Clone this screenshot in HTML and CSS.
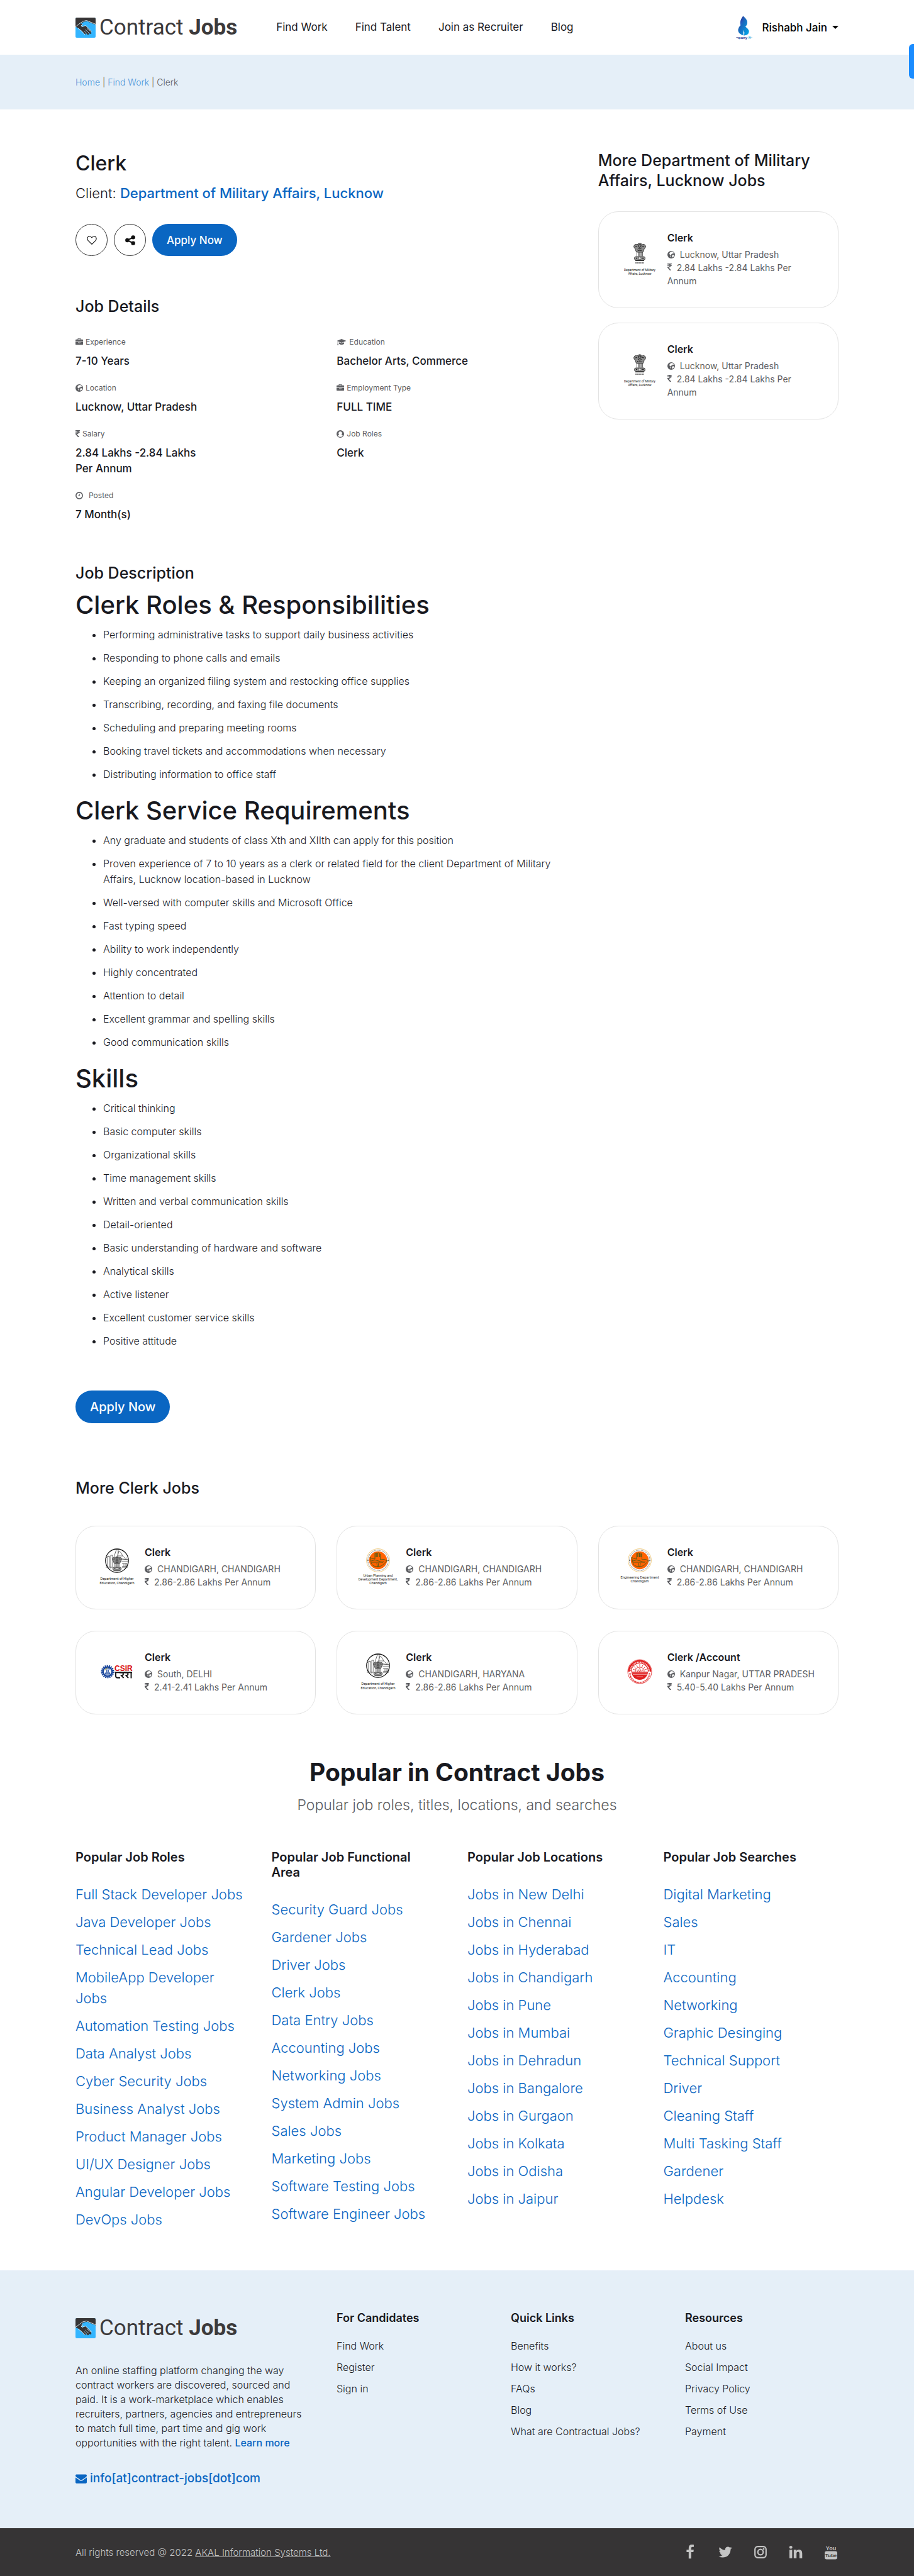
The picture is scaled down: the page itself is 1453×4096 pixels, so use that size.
FILE: index.html
```html
<!DOCTYPE html>
<html lang="en">
<head>
<meta charset="utf-8">
<meta name="viewport" content="width=device-width, initial-scale=1">
<title>Clerk | Contract Jobs</title>
<link rel="stylesheet" href="styles.css">
</head>
<body>
<svg class="sprite" aria-hidden="true">
  <symbol id="i-mark" viewBox="0 0 32 32">
    <rect width="32" height="32" rx="2" fill="#33b5ff"/>
    <path d="M2 0h28q2 0 2 2v9.500l-8.500-3.500-5-2.200-5 1-7.500 4.700-6 3.500V2q0-2 2-2z" fill="#363435"/>
    <path d="M0 14.500 6.500 9l5.500 1.500-3 2.300 1.500 1.700 5.500-2 9.500 9.500-1 1.500 1 1.500-1.500 1-3.200-1.500.7 2.300-2 .4-3.500-3 .5 2.300-1.800.3L10 21.500 4 16.500z" fill="#363435"/>
    <path d="M0 14.500 6 10l5.500-4 6-1.500L32 10.500M12 10.300l-3 2.500 1.500 1.700 5.500-2 9.800 9.700M4 17l6 4.500 5 5.500" fill="none" stroke="#e8f7ff" stroke-width=".9"/>
    <path d="m15.500 19 5.500 5M13.500 21l4.500 4.500M18 17l6 5" stroke="#bfe8ff" stroke-width=".8"/>
  </symbol>
  <symbol id="i-briefcase" viewBox="0 0 1792 1792"><path d="M640 256h512v-128h-512v128zm1152 640v480q0 66-47 113t-113 47h-1472q-66 0-113-47t-47-113v-480h672v160q0 26 19 45t45 19h320q26 0 45-19t19-45v-160h672zm-768 0v128h-256v-128h256zm768-480v384h-1792v-384q0-66 47-113t113-47h352v-160q0-40 28-68t68-28h576q40 0 68 28t28 68v160h352q66 0 113 47t47 113z"/></symbol>
  <symbol id="i-rupee" viewBox="448 0 900 1792"><path d="M1345 470v102q0 14-9 23t-23 9h-168q-23 144-129 234t-276 110q167 178 459 536 14 16 4 34-8 18-29 18h-195q-16 0-25-12-306-367-498-571-9-9-9-22v-127q0-13 9.500-22.500t22.500-9.500h112q132 0 212.500-43t102.500-125h-427q-14 0-23-9t-9-23v-102q0-14 9-23t23-9h413q-57-113-268-113h-145q-13 0-22.500-9.500t-9.500-22.500v-133q0-14 9-23t23-9h832q14 0 23 9t9 23v102q0 14-9 23t-23 9h-233q47 61 64 144h171q14 0 23 9t9 23z"/></symbol>
  <symbol id="i-globe" viewBox="0 0 24 24">
    <circle cx="12" cy="12" r="12"/>
    <path d="M11 3l4-.8 5 3.300-.5 2.500-3-.5-1 2.500-3 .5-1 2.500-3-.5L6 9l2-4zM15 13.500l4-1 2.500 1-1.500 4-3.500 3.500-2-3.500zM8.500 14.500l3 1 .5 2.500-2 2z" fill="#fff"/>
  </symbol>
  <symbol id="i-cap" viewBox="0 0 30 24">
    <path d="M15 2 30 8 15 14 0 8zM7 12.500l8 3.200 8-3.200v4.500q-2 3-8 3t-8-3zM2.500 10l1.500.6V16l1.200 6H1.500l1-6z"/>
  </symbol>
  <symbol id="i-user" viewBox="0 0 24 24">
    <path fill-rule="evenodd" d="M12 0a12 12 0 1 1 0 24 12 12 0 0 1 0-24zM12 4a5.500 5.500 0 0 0-3.500 9.800Q5 14.500 4.300 18a9.800 9.800 0 0 0 15.400 0Q19 14.500 15.500 13.800A5.500 5.500 0 0 0 12 4z"/>
  </symbol>
  <symbol id="i-clock" viewBox="0 0 24 24">
    <circle cx="12" cy="12" r="10.300" fill="none" stroke="currentColor" stroke-width="3.200"/>
    <path d="M12.500 6v7H8" fill="none" stroke="currentColor" stroke-width="2"/>
  </symbol>
  <symbol id="i-heart" viewBox="0 0 24 24"><path d="M12 21.500 3 12.500Q1 10 1.300 7.500 2 3 6.500 2.600 10 2.500 12 6q2-3.500 5.500-3.400Q22 3 22.700 7.500 23 10 21 12.500z" fill="none" stroke="currentColor" stroke-width="1.700" stroke-linejoin="round"/></symbol>
  <symbol id="i-share" viewBox="0 0 24 24">
    <circle cx="5" cy="12" r="4.800"/><circle cx="19" cy="5" r="4.800"/><circle cx="19" cy="19" r="4.800"/>
    <path d="M19 5 5 12l14 7" fill="none" stroke="currentColor" stroke-width="3"/>
  </symbol>
  <symbol id="i-envelope" viewBox="0 0 1792 1792"><path d="M1792 710v794q0 66-47 113t-113 47h-1472q-66 0-113-47t-47-113v-794q44 49 101 87 362 246 497 345 57 42 92.500 65.500t94.500 48 110 24.500h2q51 0 110-24.500t94.500-48 92.500-65.500q170-123 498-345 57-39 100-87zm0-294q0 79-49 151t-122 123q-376 261-468 325-10 7-42.500 31t-54 38.500-52 32.500-57.500 27-50 9h-2q-23 0-50-9t-57.500-27-52-32.500-54-38.500-42.500-31q-91-64-262-182.500t-205-142.500q-62-42-117-115.500t-55-136.500q0-78 41.500-130t118.500-52h1472q65 0 112.500 47t47.500 113z"/></symbol>
  <symbol id="i-lions" viewBox="0 0 20 34">
    <path d="M7.500 1.500Q10 0 12.500 1.500L14 3l2-.8 2.500 1.300 1 2.500-1 2.500-1.500 1-.5 3-1.500 2.500h-10L3.500 12.500 3 9.500l-1.500-1-1-2.500 1-2.500L4 2.200 6 3z" fill="#8b8b8b" stroke="#222" stroke-width=".8"/>
    <path d="M8 3h4v3l-2 1.500L8 6zM7 8l3 2 3-2M6 5.500 3 6M14 5.500l3 .5M6 11l1.500 1.500L10 12l2.500.5L14 11" fill="none" stroke="#111" stroke-width=".9"/>
    <path d="M5.500 15v6.500M7.500 15v6.500M9.200 15v6.500M11 15v6.500M12.800 15v6.500M14.600 15v6.500" stroke="#333" stroke-width=".8"/>
    <rect x="1.500" y="22" width="17" height="5.500" rx="2.500" fill="#999" stroke="#222" stroke-width=".8"/>
    <circle cx="10" cy="24.700" r="2.200" fill="#ddd" stroke="#222" stroke-width=".6"/>
    <path d="M4 24.500h2M14 24.500h2.500" stroke="#222" stroke-width="1.500"/>
    <path d="M3 28.500h14" stroke="#333" stroke-width="1.200"/>
    <path d="M3 32h14" stroke="#555" stroke-width="1.400" stroke-dasharray="2 .5"/>
  </symbol>
  <symbol id="l-military" viewBox="0 0 66 58">
    <use href="#i-lions" x="23" y="3" width="20" height="34"/>
    <g class="cap" text-anchor="middle"><text x="33" y="48" font-size="5">Department of Military</text><text x="33" y="54" font-size="5">Affairs, Lucknow</text></g>
  </symbol>
  <symbol id="l-higher" viewBox="0 0 66 58">
    <ellipse cx="33" cy="19.500" rx="18.200" ry="18.500" fill="#fff" stroke="#111" stroke-width="1.300"/>
    <path d="M18 30V13h3v17M23 32V11h3v20M28 14l4-12h3l-1 12M36 4q4 2 6 8h-8zM16 15l3-3 3 2M42 12l4 4 3-1M40 18h10M40 21h10M41 24h8v5h-8M44 24v5M47 24v5M36 16l14 2M15 30h10M41 30h9" fill="none" stroke="#333" stroke-width=".7"/>
    <use href="#i-lions" x="25" y="12" width="16" height="28"/>
    <g class="cap" text-anchor="middle"><text x="33" y="50" font-size="5.500">Department of Higher</text><text x="33" y="56.500" font-size="5.500">Education, Chandigarh</text></g>
  </symbol>
  <symbol id="i-hand" viewBox="0 0 38 38">
    <circle cx="19" cy="19" r="18.400" fill="#fff" stroke="#eec26a" stroke-width=".8"/>
    <circle cx="19" cy="19" r="16.200" fill="none" stroke="#8a8a8a" stroke-width="1.600" stroke-dasharray="1 .9 1.400 .7" opacity=".75"/>
    <circle cx="19" cy="19" r="14.200" fill="#ff6200"/>
    <path d="M6 14q3 3 8 3V8.500q0-1 1-1t1 1V14 8q0-1 1.200-1T18.500 8v6V8q0-1 1.100-1T21 8v6-5q1-1 1.500 0v9l6-.5 5 2.500-4 3q-4 6-11 6-8 0-10-5l-2-8zM8 20q6-3 12 0t8 1M9 22h18M17 23l1 7M20 23l-1 7" fill="none" stroke="#4b5a17" stroke-width=".9"/>
    <circle cx="3" cy="19" r=".8"/><circle cx="35" cy="19" r=".8"/>
  </symbol>
  <symbol id="l-urban" viewBox="0 0 66 58">
    <use href="#i-hand" x="14" y="0" width="38" height="38"/>
    <g class="cap" text-anchor="middle"><text x="33" y="45" font-size="5.400">Urban Planning and</text><text x="33" y="51" font-size="5.400">Development Department,</text><text x="33" y="57" font-size="5.400">Chandigarh</text></g>
  </symbol>
  <symbol id="l-engineering" viewBox="0 0 66 58">
    <use href="#i-hand" x="14" y="0" width="38" height="38"/>
    <g class="cap" text-anchor="middle"><text x="33" y="48" font-size="5.700">Engineering Department</text><text x="33" y="54" font-size="5.700">Chandigarh</text></g>
  </symbol>
  <symbol id="l-csir" viewBox="0 0 66 58">
    <circle cx="18" cy="29" r="9.300" fill="none" stroke="#17449a" stroke-width="2.400" stroke-dasharray="2 1.250"/>
    <circle cx="18" cy="29" r="7.200" fill="#fff" stroke="#17449a" stroke-width="2.400"/>
    <path d="M15 24.500h6l-2 3.500 3 5h-8l3-5zM14.500 31h7" fill="#b8c8e8" stroke="#17449a" stroke-width="1"/>
    <path d="m13.500 27 4-4.500" stroke="#e8c21c" stroke-width="1"/>
    <text class="csir" x="29" y="27.500" font-size="12" fill="#d90b12">CSIR</text>
    <path d="M29.500 30.300h27.500" stroke="#111" stroke-width="2"/>
    <path d="M31 30.500v5.500q0 2.800 3 2.800h4M37 30.500h3q3 0 3 2.300t-3 2.300l3.500 4M44.500 30.500h3q3 0 3 2.300t-3 2.300l3.500 4M55.500 30v9.500" fill="none" stroke="#111" stroke-width="1.900"/>
  </symbol>
  <symbol id="l-kanpur" viewBox="0 0 66 58">
    <circle cx="33" cy="29" r="19" fill="#fff" stroke="#e02020" stroke-width=".8"/>
    <path d="M14.500 29a18.500 18.500 0 0 1 37 0H46a13 13 0 0 0-26 0z" fill="#e02020"/>
    <path d="M18 29a15 15 0 0 1 30 0" fill="none" stroke="#fff" stroke-width="2" stroke-dasharray="1.500 1 2 .8" opacity=".8"/>
    <path d="M17.500 31a15.500 15.500 0 0 0 31 0" fill="none" stroke="#e02020" stroke-width="2.200" stroke-dasharray="1 .7"/>
    <path d="M20 29h26a13 13 0 0 1-26 0z" fill="#e02020"/>
    <path d="M21 31h24M22 33.500h22M28 37h10" stroke="#fff" stroke-width=".6" opacity=".8"/>
    <path d="M33 17v4M28 18l1.500 4M38 18l-1.500 4M24 21l3 3M42 21l-3 3M22 25l4 1.500M44 25l-4 1.500M26 29q0-7 7-7t7 7" fill="none" stroke="#e02020" stroke-width=".8"/>
    <path d="M33 23q3 3 0 7-3-4 0-7zM28 26q4 0 5 4-4 0-5-4zM38 26q-4 0-5 4 4 0 5-4z" fill="#fff" stroke="#e02020" stroke-width=".6"/>
  </symbol>
</svg>

<header class="header">
  <div class="container header-row">
    <a class="logo" href="#"><svg class="logo-mark"><use href="#i-mark"/></svg><span>Contract <b>Jobs</b></span></a>
    <nav class="nav">
      <a href="#">Find Work</a><a href="#">Find Talent</a><a href="#">Join as Recruiter</a><a href="#">Blog</a>
    </nav>
    <button class="account" type="button">
      <svg class="avatar" viewBox="0 0 40 40">
        <defs><linearGradient id="g1" x2="1" y2="1"><stop offset="0" stop-color="#2a3b9b"/><stop offset="1" stop-color="#00aeef"/></linearGradient>
        <linearGradient id="g2" x2=".3" y2="1"><stop offset="0" stop-color="#2b2f8f"/><stop offset="1" stop-color="#1f6fd0"/></linearGradient></defs>
        <path d="M18.500 1.500Q26 8 25 13q-.5 3-3 5.500Q30 24 27 29q-2 3-7 3.500 1-4-.5-9-1.500 4-.5 9Q11 30 10.500 25q-.5-5 4-9-2-7 4-14.500z" fill="url(#g1)"/>
        <path d="M18 2q2.500 8-3.500 15-1-3-.7-6Q14.500 6 18 2z" fill="url(#g2)"/>
        <text x="20" y="37.500" text-anchor="middle" class="avatar-cap"><tspan fill="#2b3990">mpany</tspan><tspan fill="#29abe2"> Na</tspan></text>
      </svg>
      <span>Rishabh Jain</span><i class="caret"></i>
    </button>
  </div>
</header>
<div class="side-tab"></div>

<div class="crumbs">
  <nav class="container" aria-label="Breadcrumb"><a href="#">Home</a> | <a href="#">Find Work</a> | <span>Clerk</span></nav>
</div>

<main class="container page">
  <div class="grid3">
    <article class="job">
      <h1>Clerk</h1>
      <p class="client">Client: <a href="#">Department of Military Affairs, Lucknow</a></p>
      <div class="actions">
        <button class="round" type="button" aria-label="Save job"><svg><use href="#i-heart"/></svg></button>
        <button class="round" type="button" aria-label="Share job"><svg><use href="#i-share"/></svg></button>
        <button class="apply" type="button">Apply Now</button>
      </div>

      <h2 class="details-title">Job Details</h2>
      <dl class="details">
        <div><dt><svg class="ico"><use href="#i-briefcase"/></svg>Experience</dt><dd>7-10 Years</dd></div>
        <div><dt><svg class="ico wide"><use href="#i-cap"/></svg>Education</dt><dd>Bachelor Arts, Commerce</dd></div>
        <div><dt><svg class="ico"><use href="#i-globe"/></svg>Location</dt><dd>Lucknow, Uttar Pradesh</dd></div>
        <div><dt><svg class="ico"><use href="#i-briefcase"/></svg>Employment Type</dt><dd>FULL TIME</dd></div>
        <div><dt><svg class="ico slim"><use href="#i-rupee"/></svg>Salary</dt><dd>2.84 Lakhs -2.84 Lakhs Per Annum</dd></div>
        <div><dt><svg class="ico"><use href="#i-user"/></svg>Job Roles</dt><dd>Clerk</dd></div>
        <div><dt class="posted"><svg class="ico"><use href="#i-clock"/></svg>Posted</dt><dd>7 Month(s)</dd></div>
      </dl>

      <h2 class="details-title">Job Description</h2>
      <section class="desc">
        <h3>Clerk Roles &amp; Responsibilities</h3>
        <ul>
          <li>Performing administrative tasks to support daily business activities</li>
          <li>Responding to phone calls and emails</li>
          <li>Keeping an organized filing system and restocking office supplies</li>
          <li>Transcribing, recording, and faxing file documents</li>
          <li>Scheduling and preparing meeting rooms</li>
          <li>Booking travel tickets and accommodations when necessary</li>
          <li>Distributing information to office staff</li>
        </ul>
        <h3>Clerk Service Requirements</h3>
        <ul>
          <li>Any graduate and students of class Xth and XIIth can apply for this position</li>
          <li>Proven experience of 7 to 10 years as a clerk or related field for the client Department of Military Affairs, Lucknow location-based in Lucknow</li>
          <li>Well-versed with computer skills and Microsoft Office</li>
          <li>Fast typing speed</li>
          <li>Ability to work independently</li>
          <li>Highly concentrated</li>
          <li>Attention to detail</li>
          <li>Excellent grammar and spelling skills</li>
          <li>Good communication skills</li>
        </ul>
        <h3>Skills</h3>
        <ul>
          <li>Critical thinking</li>
          <li>Basic computer skills</li>
          <li>Organizational skills</li>
          <li>Time management skills</li>
          <li>Written and verbal communication skills</li>
          <li>Detail-oriented</li>
          <li>Basic understanding of hardware and software</li>
          <li>Analytical skills</li>
          <li>Active listener</li>
          <li>Excellent customer service skills</li>
          <li>Positive attitude</li>
        </ul>
      </section>
      <button class="apply large" type="button">Apply Now</button>
    </article>

    <aside class="side">
      <h2>More Department of Military Affairs, Lucknow Jobs</h2>
      <div class="side-cards">
        <a class="card" href="#"><svg class="card-logo"><use href="#l-military"/></svg><span class="card-body"><strong>Clerk</strong><span><svg class="ico"><use href="#i-globe"/></svg>Lucknow, Uttar Pradesh</span><span><svg class="ico slim"><use href="#i-rupee"/></svg>2.84 Lakhs -2.84 Lakhs Per Annum</span></span></a>
        <a class="card" href="#"><svg class="card-logo"><use href="#l-military"/></svg><span class="card-body"><strong>Clerk</strong><span><svg class="ico"><use href="#i-globe"/></svg>Lucknow, Uttar Pradesh</span><span><svg class="ico slim"><use href="#i-rupee"/></svg>2.84 Lakhs -2.84 Lakhs Per Annum</span></span></a>
      </div>
    </aside>
  </div>

  <section class="more">
    <h2>More Clerk Jobs</h2>
    <div class="grid3 cards">
      <a class="card" href="#"><svg class="card-logo"><use href="#l-higher"/></svg><span class="card-body"><strong>Clerk</strong><span><svg class="ico"><use href="#i-globe"/></svg>CHANDIGARH, CHANDIGARH</span><span><svg class="ico slim"><use href="#i-rupee"/></svg>2.86-2.86 Lakhs Per Annum</span></span></a>
      <a class="card" href="#"><svg class="card-logo"><use href="#l-urban"/></svg><span class="card-body"><strong>Clerk</strong><span><svg class="ico"><use href="#i-globe"/></svg>CHANDIGARH, CHANDIGARH</span><span><svg class="ico slim"><use href="#i-rupee"/></svg>2.86-2.86 Lakhs Per Annum</span></span></a>
      <a class="card" href="#"><svg class="card-logo"><use href="#l-engineering"/></svg><span class="card-body"><strong>Clerk</strong><span><svg class="ico"><use href="#i-globe"/></svg>CHANDIGARH, CHANDIGARH</span><span><svg class="ico slim"><use href="#i-rupee"/></svg>2.86-2.86 Lakhs Per Annum</span></span></a>
      <a class="card" href="#"><svg class="card-logo"><use href="#l-csir"/></svg><span class="card-body"><strong>Clerk</strong><span><svg class="ico"><use href="#i-globe"/></svg>South, DELHI</span><span><svg class="ico slim"><use href="#i-rupee"/></svg>2.41-2.41 Lakhs Per Annum</span></span></a>
      <a class="card" href="#"><svg class="card-logo"><use href="#l-higher"/></svg><span class="card-body"><strong>Clerk</strong><span><svg class="ico"><use href="#i-globe"/></svg>CHANDIGARH, HARYANA</span><span><svg class="ico slim"><use href="#i-rupee"/></svg>2.86-2.86 Lakhs Per Annum</span></span></a>
      <a class="card" href="#"><svg class="card-logo"><use href="#l-kanpur"/></svg><span class="card-body"><strong>Clerk /Account</strong><span><svg class="ico"><use href="#i-globe"/></svg>Kanpur Nagar, UTTAR PRADESH</span><span><svg class="ico slim"><use href="#i-rupee"/></svg>5.40-5.40 Lakhs Per Annum</span></span></a>
    </div>
  </section>

  <section class="popular">
    <h2>Popular in Contract Jobs</h2>
    <p>Popular job roles, titles, locations, and searches</p>
    <div class="popular-cols">
      <div><h3>Popular Job Roles</h3><ul>
        <li><a href="#">Full Stack Developer Jobs</a></li><li><a href="#">Java Developer Jobs</a></li><li><a href="#">Technical Lead Jobs</a></li><li><a href="#">MobileApp Developer Jobs</a></li><li><a href="#">Automation Testing Jobs</a></li><li><a href="#">Data Analyst Jobs</a></li><li><a href="#">Cyber Security Jobs</a></li><li><a href="#">Business Analyst Jobs</a></li><li><a href="#">Product Manager Jobs</a></li><li><a href="#">UI/UX Designer Jobs</a></li><li><a href="#">Angular Developer Jobs</a></li><li><a href="#">DevOps Jobs</a></li>
      </ul></div>
      <div><h3>Popular Job Functional Area</h3><ul>
        <li><a href="#">Security Guard Jobs</a></li><li><a href="#">Gardener Jobs</a></li><li><a href="#">Driver Jobs</a></li><li><a href="#">Clerk Jobs</a></li><li><a href="#">Data Entry Jobs</a></li><li><a href="#">Accounting Jobs</a></li><li><a href="#">Networking Jobs</a></li><li><a href="#">System Admin Jobs</a></li><li><a href="#">Sales Jobs</a></li><li><a href="#">Marketing Jobs</a></li><li><a href="#">Software Testing Jobs</a></li><li><a href="#">Software Engineer Jobs</a></li>
      </ul></div>
      <div><h3>Popular Job Locations</h3><ul>
        <li><a href="#">Jobs in New Delhi</a></li><li><a href="#">Jobs in Chennai</a></li><li><a href="#">Jobs in Hyderabad</a></li><li><a href="#">Jobs in Chandigarh</a></li><li><a href="#">Jobs in Pune</a></li><li><a href="#">Jobs in Mumbai</a></li><li><a href="#">Jobs in Dehradun</a></li><li><a href="#">Jobs in Bangalore</a></li><li><a href="#">Jobs in Gurgaon</a></li><li><a href="#">Jobs in Kolkata</a></li><li><a href="#">Jobs in Odisha</a></li><li><a href="#">Jobs in Jaipur</a></li>
      </ul></div>
      <div><h3>Popular Job Searches</h3><ul>
        <li><a href="#">Digital Marketing</a></li><li><a href="#">Sales</a></li><li><a href="#">IT</a></li><li><a href="#">Accounting</a></li><li><a href="#">Networking</a></li><li><a href="#">Graphic Desinging</a></li><li><a href="#">Technical Support</a></li><li><a href="#">Driver</a></li><li><a href="#">Cleaning Staff</a></li><li><a href="#">Multi Tasking Staff</a></li><li><a href="#">Gardener</a></li><li><a href="#">Helpdesk</a></li>
      </ul></div>
    </div>
  </section>
</main>

<footer>
  <div class="footer">
    <div class="container footer-cols">
      <div>
        <a class="logo" href="#"><svg class="logo-mark"><use href="#i-mark"/></svg><span>Contract <b>Jobs</b></span></a>
        <p class="about">An online staffing platform changing the way contract workers are discovered, sourced and paid. It is a work-marketplace which enables recruiters, partners, agencies and entrepreneurs to match full time, part time and gig work opportunities with the right talent. <a href="#">Learn more</a></p>
        <a class="email" href="#"><svg><use href="#i-envelope"/></svg>info[at]contract-jobs[dot]com</a>
      </div>
      <nav><h3>For Candidates</h3><a href="#">Find Work</a><a href="#">Register</a><a href="#">Sign in</a></nav>
      <nav><h3>Quick Links</h3><a href="#">Benefits</a><a href="#">How it works?</a><a href="#">FAQs</a><a href="#">Blog</a><a href="#">What are Contractual Jobs?</a></nav>
      <nav><h3>Resources</h3><a href="#">About us</a><a href="#">Social Impact</a><a href="#">Privacy Policy</a><a href="#">Terms of Use</a><a href="#">Payment</a></nav>
    </div>
  </div>
  <div class="legal">
    <div class="container legal-row">
      <p>All rights reserved @ 2022 <a href="#">AKAL Information Systems Ltd.</a></p>
      <div class="social">
        <a href="#" aria-label="Facebook"><svg viewBox="0 0 1792 1792"><path d="M1343 12v264h-157q-86 0-116 36t-30 108v189h293l-39 296h-254v759h-306v-759h-255v-296h255v-218q0-186 104-288.500t277-102.500q147 0 228 12z"/></svg></a>
        <a href="#" aria-label="Twitter"><svg viewBox="0 0 1792 1792"><path d="M1684 408q-67 98-162 167 1 14 1 42 0 130-38 259.500t-115.500 248.500-184.500 210.500-258 146-323 54.500q-271 0-496-145 35 4 78 4 225 0 401-138-105-2-188-64.500t-114-159.500q33 5 61 5 43 0 85-11-112-23-185.500-111.500t-73.500-205.500v-4q68 38 146 41-66-44-105-115t-39-154q0-88 44-163 121 149 294.500 238.500t371.500 99.500q-8-38-8-74 0-134 94.500-228.500t228.500-94.500q140 0 236 102 109-21 205-78-37 115-142 178 93-10 186-50z"/></svg></a>
        <a href="#" aria-label="Instagram"><svg viewBox="0 0 24 24"><rect x="3.200" y="3.200" width="17.600" height="17.600" rx="4.500" fill="none" stroke="currentColor" stroke-width="2.200"/><circle cx="12" cy="12" r="4.300" fill="none" stroke="currentColor" stroke-width="2.200"/><circle cx="17" cy="7" r="1.400"/></svg></a>
        <a href="#" aria-label="LinkedIn"><svg viewBox="0 0 1792 1792"><path d="M477 625v991h-330v-991h330zm21-306q1 73-50.500 122t-135.500 49h-2q-82 0-132-49t-50-122q0-74 51.500-122.500t134.500-48.500 133 48.500 51 122.500zm1166 729v568h-329v-530q0-105-40.500-164.500t-126.500-59.500q-63 0-105.500 34.500t-63.500 85.500q-11 30-11 81v553h-329q2-399 2-647t-1-296l-1-48h329v144h-2q20-32 41-56t56.500-52 87-43.500 114.500-15.500q171 0 275 113.500t104 332.500z"/></svg></a>
        <a href="#" aria-label="YouTube"><svg viewBox="0 0 24 24"><text class="yt" x="12" y="8.500" text-anchor="middle" font-size="9">You</text><rect x="2" y="10.500" width="20" height="13" rx="3"/><text class="yt dark" x="12" y="20" text-anchor="middle" font-size="8">Tube</text></svg></a>
      </div>
    </div>
  </div>
</footer>
</body>
</html>
```
FILE: styles.css
```css
:root {
  --ink: #18191f;
  --muted: #5c5d61;
  --blue: #0a66c2;
  --pale: #e5eff8;
  --line: #e3e3e3;
}

* { box-sizing: border-box; }

body {
  margin: 0;
  background: #fff;
  color: var(--ink);
  font: 300 16px/25px Inter, "Open Sans", sans-serif;
  overflow-x: hidden;
}

h1, h2, h3, p, ul, dl, dd { margin: 0; padding: 0; font-weight: 500; }
p { font-weight: 300; }
a { color: inherit; text-decoration: none; }
button { font-family: inherit; cursor: pointer; }
svg { display: block; fill: currentColor; }

.sprite { display: none; }

.container {
  width: 100%;
  max-width: 1245px;
  margin: 0 auto;
  padding: 0 16px;
}

/* Header */
.header-row { display: flex; align-items: center; height: 87px; }

.logo {
  display: flex;
  align-items: center;
  gap: 6px;
  height: 32px;
  color: #3c3a3b;
  font: 400 35px/32px Roboto, sans-serif;
  white-space: nowrap;
}
.logo b { font-weight: 700; }
.logo-mark { width: 32px; height: 32px; }

.nav {
  display: flex;
  gap: 44px;
  margin-left: 62px;
  font-size: 17px;
  font-weight: 400;
}

.account {
  display: flex;
  align-items: center;
  gap: 8px;
  margin-left: auto;
  padding: 0;
  border: 0;
  background: none;
  color: #000;
  font-size: 17px;
  font-weight: 500;
}
.avatar { width: 40px; height: 40px; border-radius: 50%; }
.avatar-cap { font: 700 6px "Liberation Sans", sans-serif; }
.caret {
  border: 5px solid transparent;
  border-top-color: #000;
  border-bottom: 0;
}

.side-tab {
  position: absolute;
  top: 70px;
  right: 0;
  width: 8px;
  height: 55px;
  border-radius: 6px 0 0 6px;
  background: #1a8cff;
}

/* Breadcrumb */
.crumbs {
  display: flex;
  align-items: center;
  height: 87px;
  background: var(--pale);
  color: var(--muted);
  font-size: 14px;
}
.crumbs a { color: #4a94d8; }

/* Job */
.grid3 {
  display: grid;
  grid-template-columns: repeat(3, minmax(0, 1fr));
  column-gap: 33px;
}
.page { padding-top: 65px; }
.job { grid-column: span 2; }

h1 { font-size: 32px; line-height: 42px; }
h2 { font-size: 25px; line-height: 32px; }

.client { margin-top: 10px; font-size: 22px; line-height: 32px; }
.client a { color: var(--blue); font-weight: 500; }

.actions { display: flex; gap: 10px; margin-top: 33px; }
.round {
  display: grid;
  place-items: center;
  width: 51px;
  height: 51px;
  padding: 0;
  border: 1px solid #333;
  border-radius: 50%;
  background: #fff;
  color: #111;
}
.round svg { width: 16px; height: 16px; }
.apply {
  height: 51px;
  padding: 0 23px;
  border: 0;
  border-radius: 26px;
  background: var(--blue);
  color: #fff;
  font-size: 17px;
  font-weight: 500;
}
.apply.large { height: 52px; margin-top: 66px; font-size: 20px; }

.details-title { margin-top: 64px; }
.details {
  display: grid;
  grid-template-columns: 1fr 1fr;
  gap: 20px 33px;
  margin-top: 31px;
}
dt {
  display: flex;
  align-items: center;
  gap: 4px;
  color: var(--muted);
  font-size: 12px;
  font-weight: 400;
  line-height: 20px;
}
dt.posted { gap: 9px; }
dd {
  max-width: 212px;
  margin-top: 8px;
  font-size: 17px;
  line-height: 25px;
}
.ico { flex: none; width: 12px; height: 12px; }
.ico.wide { width: 16px; }
.ico.slim { width: 7px; height: 14px; }

.desc h3 { margin-top: 12px; font-size: 40px; line-height: 46px; }
.desc ul + h3 { margin-top: 22px; }
.desc ul {
  display: grid;
  gap: 12px;
  margin-top: 12px;
  padding-left: 44px;
  font-weight: 300;
}

/* Job cards */
.side-cards { display: grid; gap: 23px; margin-top: 33px; }
.card {
  display: flex;
  align-items: center;
  gap: 11px;
  padding: 29px 30px 32px 32px;
  border: 1px solid var(--line);
  border-radius: 32px;
}
.card-logo { flex: none; width: 66px; height: 58px; }
.card-body { display: block; color: var(--muted); font-size: 14px; font-weight: 400; line-height: 21px; }
.card-body > * { display: block; }
.card-body strong {
  margin-bottom: 4px;
  color: var(--ink);
  font-size: 16px;
  font-weight: 600;
  line-height: 24px;
}
.card-body .ico { display: inline-block; margin-right: 8px; vertical-align: -1px; }
.cap { fill: #111; font-family: Roboto, sans-serif; font-weight: 400; }
.csir { font-family: "Liberation Sans", sans-serif; font-weight: 700; }

.more { margin-top: 87px; }
.cards { row-gap: 34px; margin-top: 44px; }

/* Popular */
.popular { margin-top: 68px; }
.popular > h2 { font-size: 39px; font-weight: 700; line-height: 48px; text-align: center; }
.popular > p {
  margin-top: 12px;
  color: var(--muted);
  font-size: 23px;
  line-height: 33px;
  text-align: center;
}
.popular-cols {
  display: grid;
  grid-template-columns: repeat(4, minmax(0, 1fr));
  gap: 33px;
  margin-top: 54px;
}
.popular-cols h3 { max-width: 250px; font-size: 20px; font-weight: 600; line-height: 24px; }
.popular-cols ul {
  display: grid;
  gap: 11px;
  max-width: 272px;
  margin-top: 31px;
  color: var(--blue);
  font-size: 22px;
  font-weight: 300;
  line-height: 33px;
  list-style: none;
}

/* Footer */
.footer { margin-top: 64px; padding: 64px 0 66px; background: var(--pale); }
.footer-cols {
  display: grid;
  grid-template-columns: 382fr 244fr 244fr 244fr;
  gap: 33px;
}
.footer .logo { margin-top: 12px; }
.about { margin-top: 40px; padding-right: 12px; line-height: 23px; }
.about a { color: var(--blue); font-weight: 500; }
.email {
  display: flex;
  align-items: center;
  gap: 5px;
  margin-top: 31px;
  color: var(--blue);
  font-size: 19px;
  font-weight: 500;
  line-height: 27px;
}
.email svg { width: 18px; height: 18px; }
.footer nav { display: grid; align-content: start; gap: 10px; line-height: 24px; }
.footer h3 { margin-bottom: 10px; font-size: 18px; font-weight: 600; }

.legal { background: #363435; color: #c4c4c4; font-size: 15px; }
.legal-row { display: flex; align-items: center; justify-content: space-between; height: 76px; }
.legal a { text-decoration: underline; }
.social { display: flex; gap: 32px; }
.social svg { width: 24px; height: 24px; }
.yt { font-family: "Liberation Sans", sans-serif; font-weight: 700; }
.yt.dark { fill: #363435; }
```
